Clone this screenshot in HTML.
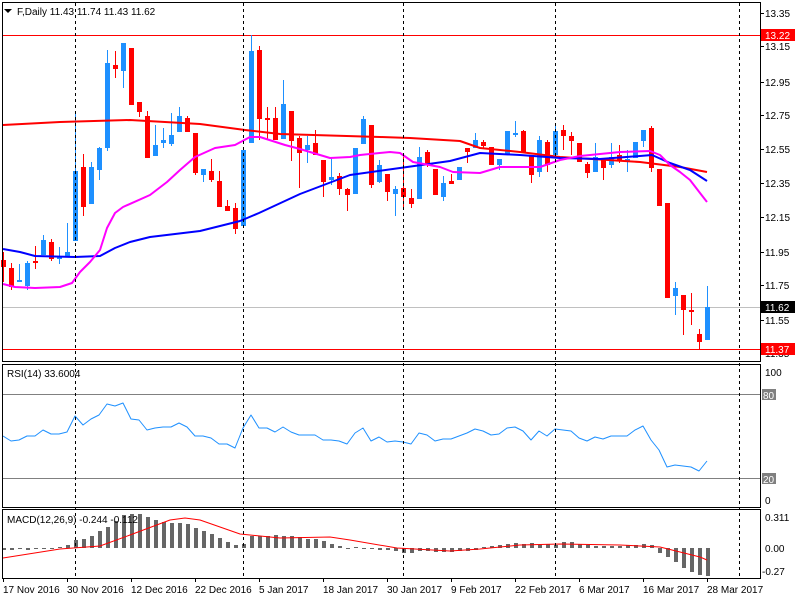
<!DOCTYPE html>
<html><head><meta charset="utf-8"><style>
html,body{margin:0;padding:0;background:#fff;width:800px;height:600px;overflow:hidden}
svg{display:block;font-family:"Liberation Sans",sans-serif;font-size:10px}
</style></head><body>
<svg id="s" width="800" height="600" xmlns="http://www.w3.org/2000/svg">
<rect width="800" height="600" fill="#fff"/>
<g id="g"></g>
<g fill="none" stroke="#000" stroke-width="1" shape-rendering="crispEdges">
<rect x="2.5" y="2.5" width="758" height="359"/>
<rect x="2.5" y="364.5" width="758" height="143"/>
<rect x="2.5" y="509.5" width="758" height="69"/>
</g>
<g stroke="#000" stroke-dasharray="3,3" shape-rendering="crispEdges">
<line x1="75.5" y1="3" x2="75.5" y2="578"/><line x1="243.5" y1="3" x2="243.5" y2="578"/>
<line x1="403.5" y1="3" x2="403.5" y2="578"/><line x1="555.5" y1="3" x2="555.5" y2="578"/>
<line x1="739.5" y1="3" x2="739.5" y2="578"/>
</g>
<path d="M4 9 L12 9 L8 13 Z" fill="#000"/>
<text x="17" y="15" fill="#000">F,Daily  11.43 11.74 11.43 11.62</text>
<text x="7" y="377" fill="#000">RSI(14) 33.6004</text>
<text x="7" y="523" fill="#000">MACD(12,26,9) -0.244 -0.112</text>
<g fill="#000">
<text x="765" y="17">13.35</text><text x="765" y="50">13.15</text><text x="765" y="86">12.95</text>
<text x="765" y="119">12.75</text><text x="765" y="153">12.55</text><text x="765" y="187">12.35</text>
<text x="765" y="221">12.15</text><text x="765" y="256">11.95</text><text x="765" y="289">11.75</text>
<text x="765" y="324">11.55</text><text x="765" y="357">11.35</text>
<text x="765" y="376">100</text><text x="765" y="504">0</text>
<text x="765" y="521">0.311</text><text x="765" y="552">0.00</text><text x="762" y="575">-0.27</text>
</g>
<rect x="761" y="29" width="34" height="12" fill="#f00"/><text x="765" y="39" fill="#fff">13.22</text>
<rect x="761" y="301" width="34" height="12" fill="#000"/><text x="765" y="311" fill="#fff">11.62</text>
<rect x="761" y="343" width="34" height="12" fill="#f00"/><text x="765" y="353" fill="#fff">11.37</text>
<rect x="762" y="389" width="14" height="11" fill="#808080"/><text x="763" y="399" fill="#fff">80</text>
<rect x="762" y="473" width="14" height="11" fill="#808080"/><text x="763" y="483" fill="#fff">20</text>
<g fill="#000">
<text x="3" y="593">17 Nov 2016</text><text x="67" y="593">30 Nov 2016</text><text x="131" y="593">12 Dec 2016</text>
<text x="195" y="593">22 Dec 2016</text><text x="259" y="593">5 Jan 2017</text><text x="323" y="593">18 Jan 2017</text>
<text x="387" y="593">30 Jan 2017</text><text x="451" y="593">9 Feb 2017</text><text x="515" y="593">22 Feb 2017</text>
<text x="579" y="593">6 Mar 2017</text><text x="643" y="593">16 Mar 2017</text><text x="707" y="593">28 Mar 2017</text>
</g>
</svg>
<script>
var NS="http://www.w3.org/2000/svg",g=document.getElementById("g");
function el(t,a){var e=document.createElementNS(NS,t);for(var k in a)e.setAttribute(k,a[k]);g.appendChild(e);return e;}
function pl(p,c,w){el("polyline",{points:p,fill:"none",stroke:c,"stroke-width":w,"stroke-linejoin":"round"});}
el("line",{x1:3,y1:35.5,x2:760,y2:35.5,stroke:"#f00","shape-rendering":"crispEdges"});
el("line",{x1:3,y1:307.5,x2:760,y2:307.5,stroke:"#c0c0c0","shape-rendering":"crispEdges"});
el("line",{x1:3,y1:349.5,x2:760,y2:349.5,stroke:"#f00","shape-rendering":"crispEdges"});
el("line",{x1:3,y1:394.5,x2:760,y2:394.5,stroke:"#808080","shape-rendering":"crispEdges"});
el("line",{x1:3,y1:478.5,x2:760,y2:478.5,stroke:"#808080","shape-rendering":"crispEdges"});
var C=[[260,267,252,282,'r'],[268,287,263,290,'r'],[280,282,264,282,'b'],[263,286,261,290,'b'],[261,263,246,269,'r'],[240,255,235,255,'b'],[242,259,239,261,'r'],[257,259,247,264,'b'],[252,257,223,257,'b'],[171,241,111,241,'b'],
[167,207,154,216,'r'],[167,204,162,204,'b'],[148,170,147,180,'b'],[63,148,50,151,'b'],[65,69,51,78,'r'],[43,71,43,88,'b'],[48,105,48,105,'r'],[102,112,102,117,'r'],[116,158,111,158,'r'],[145,156,125,156,'b'],
[140,143,128,148,'b'],[135,144,113,146,'b'],[116,132,107,132,'b'],[118,132,116,132,'r'],[133,173,133,175,'r'],[169,175,169,182,'b'],[171,180,159,182,'r'],[181,207,171,207,'r'],[206,211,200,211,'r'],[208,229,203,234,'r'],
[150,226,150,228,'b'],[51,143,35,143,'b'],[50,119,46,140,'r'],[118,119,107,140,'r'],[118,140,107,140,'r'],[104,139,80,139,'b'],[111,141,111,161,'r'],[138,153,136,188,'r'],[145,150,136,163,'b'],[143,155,130,155,'r'],
[160,182,160,197,'r'],[177,180,157,185,'b'],[176,189,173,195,'r'],[189,195,188,211,'r'],[148,194,148,194,'b'],[119,144,116,144,'b'],[125,185,125,188,'r'],[165,182,160,183,'b'],[174,192,174,201,'r'],[189,194,186,216,'b'],
[188,197,153,210,'r'],[198,204,189,208,'r'],[157,199,147,199,'b'],[152,165,150,167,'r'],[169,195,169,195,'r'],[183,197,176,201,'b'],[181,184,174,184,'r'],[167,180,167,180,'b'],[148,152,148,163,'r'],[140,148,133,148,'b'],
[142,146,140,148,'r'],[147,165,147,165,'r'],[159,165,159,170,'b'],[131,155,131,155,'b'],[133,134,121,137,'b'],[131,153,130,153,'r'],[155,175,155,183,'r'],[140,172,136,177,'b'],[142,165,140,172,'r'],[131,155,125,155,'b'],
[130,136,125,150,'r'],[136,141,132,155,'r'],[143,162,143,162,'r'],[164,173,162,178,'r'],[157,172,143,172,'b'],[159,168,159,180,'r'],[157,165,143,168,'b'],[155,161,145,163,'r'],[159,160,150,172,'b'],[142,158,142,158,'b'],
[130,141,130,147,'b'],[128,168,126,172,'r'],[169,206,169,206,'r'],[203,298,203,298,'r'],[288,296,282,315,'b'],[295,310,295,335,'r'],[310,312,293,325,'r'],[334,342,329,349,'r'],[307,340,286,340,'b']];
C.forEach(function(c,i){var x=3+8*i,col=c[4]=='r'?'#ff0000':'#1e90ff';
el("rect",{x:x,y:c[2],width:1,height:Math.max(1,c[3]-c[2]),fill:col});
el("rect",{x:x-2,y:c[0],width:5,height:Math.max(2,c[1]-c[0]),fill:col});});
pl("3,125 60,122 130,120 200,124 245,130 280,134 380,137 410,138 460,141 480,148 520,152 560,157 640,162 680,167 707,172","#f00",2);
pl("3,249 20,252 35,256 75,257 100,256 115,248 130,242 150,237 200,231 240,221 259,213 300,194 350,175 400,168 450,161 480,153 520,155 560,158 600,159 640,156 652,155 670,163 690,170 707,181","#0000ff",2);
pl("3,284 15,287 35,288 60,287 72,283 80,272 90,262 100,250 107,228 115,213 123,207 150,195 167,182 180,170 195,157 215,148 235,145 250,137 260,137 285,145 300,149 330,158 350,157 360,155 390,152 400,153 413,162 440,167 453,172 480,173 500,167 540,167 560,160 580,156 600,154 620,152 650,151 660,155 670,165 680,172 690,180 700,193 707,202","#ff00ff",2);
var R=[436,441,440,436,436,430,434,434,432,416,425,419,415,404,406,403,419,420,430,428,427,427,423,427,436,436,438,444,444,448,428,415,428,428,432,427,432,435,435,435,440,440,441,444,433,428,441,437,442,441,442,444,433,435,441,439,439,436,433,429,431,435,434,428,427,431,440,431,436,429,430,431,438,441,437,439,436,436,436,430,426,440,450,467,465,466,467,471,461];
pl(R.map(function(y,i){return (3+8*i)+","+y}).join(" "),"#1e90ff",1);
var M=[550,550,549,550,549,549,549,547,545,540,539,536,531,527,521,515,514,514,517,520,522,523,523,524,528,531,534,538,542,545,544,536,536,536,535,536,536,537,539,539,541,544,546,549,547,549,548,550,550,551,553,553,551,551,552,552,552,551,551,550,547,546,545,544,543,544,543,545,544,545,542,542,544,545,546,546,546,546,545,545,544,545,553,557,562,568,572,575,576];
M.forEach(function(y,i){var x=3+8*i;var t=Math.min(y,548),h=Math.abs(y-548);if(h<1)h=1;el("rect",{x:x-1,y:t,width:4,height:h,fill:"#666"});});
pl("3,558 60,549 100,546 130,535 170,520 185,518 200,520 240,534 280,538 330,537 350,540 397,548 450,551 480,549 520,545 560,544 620,545 660,547 680,552 700,557 707,560","#f00",1);
[13,46,82,115,149,183,217,252,285,320,353].forEach(function(y){el("line",{x1:760,y1:y+.5,x2:764,y2:y+.5,stroke:"#000"});});
[3,67,131,195,259,323,387,451,515,579,643,707].forEach(function(x){el("line",{x1:x+.5,y1:578,x2:x+.5,y2:582,stroke:"#000"});});
</script>
</body></html>
